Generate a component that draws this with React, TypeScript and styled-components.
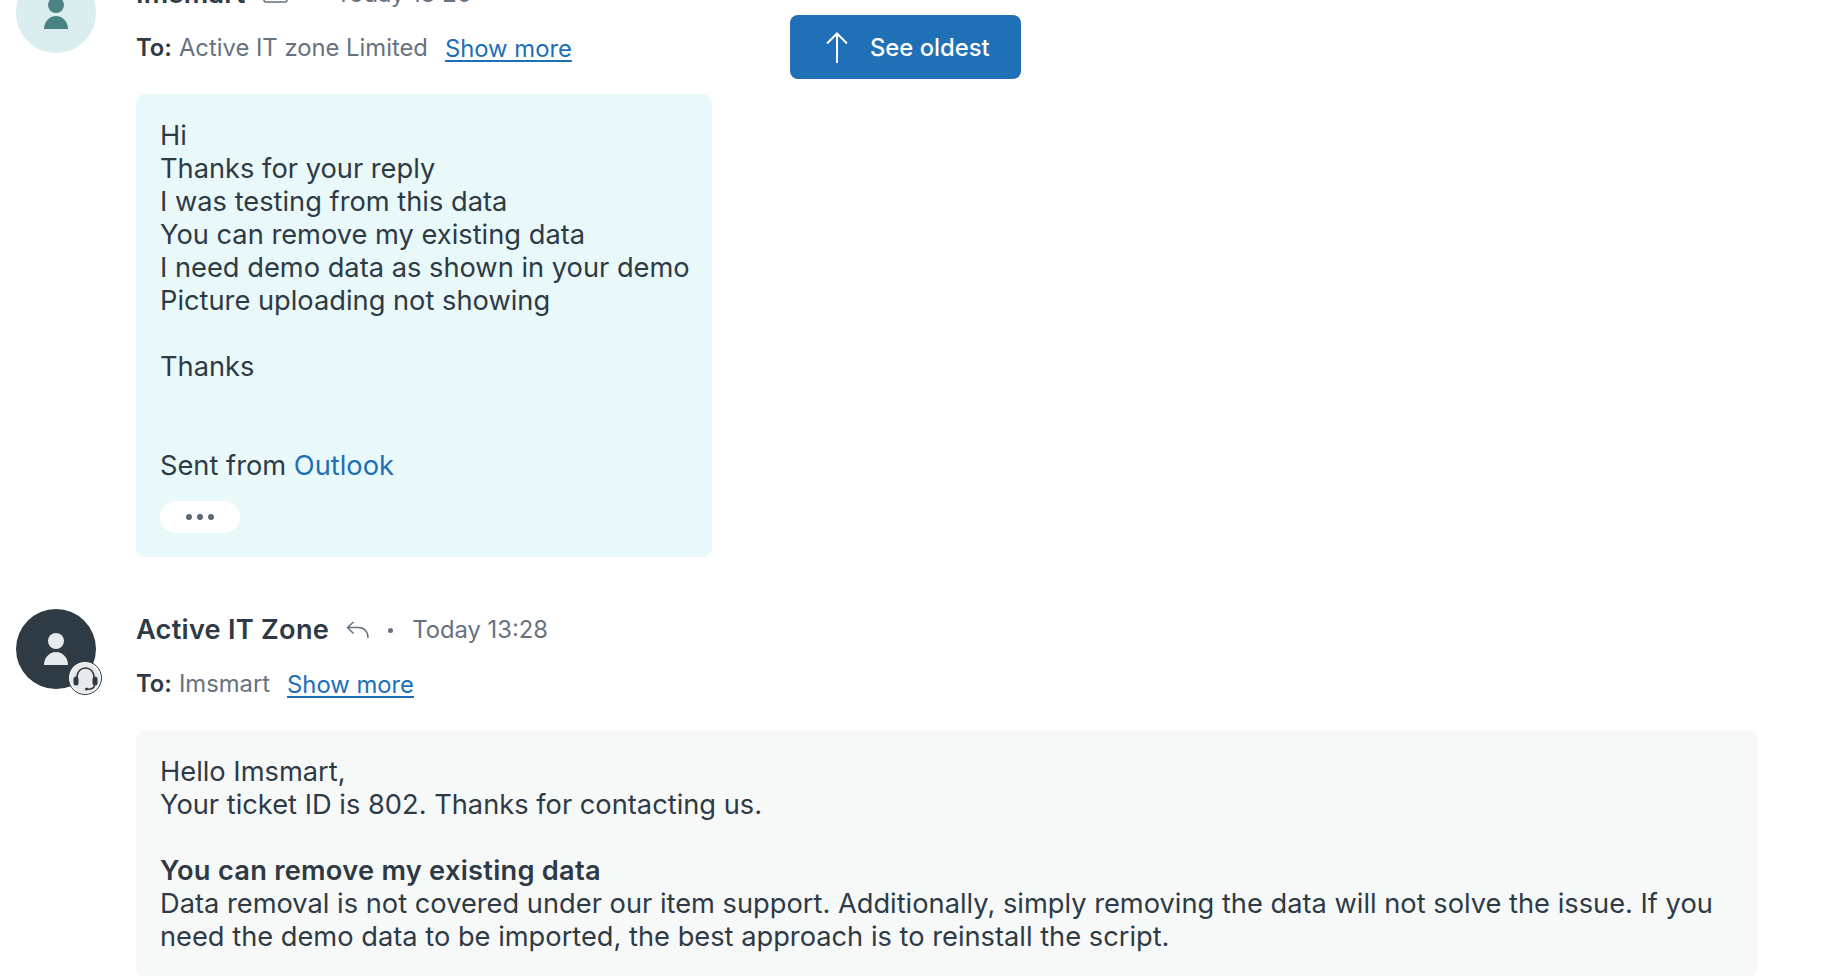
import React from 'react'
import styled, { createGlobalStyle } from 'styled-components'

const GlobalStyle = createGlobalStyle`
  html, body {
    margin: 0;
    height: 100%;
    overflow: hidden;
    background: #fff;
  }
  body {
    font-family: Inter, "Liberation Sans", sans-serif;
    color: #2e3a45;
  }
`

const Page = styled.div`
  position: relative;
  height: 976px;
  overflow: hidden;
  padding: 0 66px 0 16px;
  box-sizing: border-box;
`
const Thread = styled.div`
  display: flex;
  flex-direction: column;
  gap: 52px;
  margin-top: -27px;
`
const Message = styled.div`
  display: grid;
  grid-template-columns: 80px 1fr;
  column-gap: 40px;
`
const Avatar = styled.div<{ $agent?: boolean }>`
  position: relative;
  width: 80px;
  height: 80px;
  border-radius: 50%;
  display: flex;
  align-items: center;
  justify-content: center;
  background: ${(p) => (p.$agent ? '#2e3a44' : '#daedef')};
  color: ${(p) => (p.$agent ? '#e6eaed' : '#4a8285')};
`
const Badge = styled.span`
  position: absolute;
  right: -6px;
  bottom: -6px;
  width: 34px;
  height: 34px;
  box-sizing: border-box;
  border-radius: 50%;
  background: #e6eaed;
  border: 1.5px solid #2e3a44;
  box-shadow: inset 0 0 0 1px #fff;
  display: flex;
  align-items: center;
  justify-content: center;
  color: #2e3a44;
`
const Content = styled.div`
  min-width: 0;
`
const HeaderRow = styled.div`
  display: flex;
  align-items: center;
  height: 41px;
`
const Name = styled.span`
  font-size: 27.2px;
  font-weight: 600;
  letter-spacing: 0.25px;
  color: #2e3a45;
`
const MetaIcon = styled.span`
  display: flex;
  margin-left: 17px;
  color: #67727e;
`
const Dot = styled.span`
  width: 5px;
  height: 5px;
  border-radius: 50%;
  background: #67727e;
  margin: 2px 19px 0 19px;
`
const Time = styled.span`
  font-size: 23.8px;
  color: #67727e;
`
const ToRow = styled.div`
  display: flex;
  align-items: center;
  height: 41px;
  margin-top: 13px;
  font-size: 23.8px;
`
const ToLabel = styled.strong`
  font-weight: 600;
  margin-right: 7px;
`
const ToName = styled.span`
  color: #67727e;
`
const ShowMore = styled.a`
  margin: 2px 0 0 17px;
  color: #1d6fb8;
  text-decoration: underline;
  text-decoration-thickness: 2px;
  text-underline-offset: 3px;
`
const Card = styled.div<{ $customer?: boolean }>`
  margin-top: 26px;
  box-sizing: border-box;
  padding: 25px 16px 24px 24px;
  border-radius: 10px;
  font-size: 27.26px;
  line-height: 33px;
  width: ${(p) => (p.$customer ? '576px' : '1622px')};
  background: ${(p) => (p.$customer ? '#e9f8f8' : '#f7f9f9')};
`
const Line = styled.div`
  min-height: 33px;
`
const Strong = styled.strong`
  font-weight: 600;
  letter-spacing: 0.25px;
`
const TextLink = styled.a`
  color: #1d6fb8;
  text-decoration: none;
`
const MoreButton = styled.button`
  display: flex;
  align-items: center;
  justify-content: center;
  gap: 5px;
  width: 80px;
  height: 32px;
  margin-top: 19px;
  padding: 0;
  border: 0;
  border-radius: 16px;
  background: #fff;
  span {
    width: 6px;
    height: 6px;
    border-radius: 50%;
    background: #5b6870;
  }
`
const OldestButton = styled.button`
  position: absolute;
  left: 790px;
  top: 15px;
  width: 231px;
  height: 64px;
  display: flex;
  align-items: center;
  gap: 22px;
  padding: 0 0 0 36px;
  border: 0;
  border-radius: 8px;
  background: #1f70b6;
  color: #fff;
  font-family: inherit;
  font-size: 23.8px;
  font-weight: 500;
`

const PersonIcon = () => (
  <svg width="28" height="32" viewBox="0 0 28 32" fill="currentColor">
    <circle cx="14" cy="8" r="8" />
    <path d="M2 32c0-7 5-13 12-13s12 6 12 13z" />
  </svg>
)

const HeadsetIcon = () => (
  <svg width="27" height="25" viewBox="0 0 27 25" fill="none">
    <path d="M5 12v-1.500a8.500 8.500 0 0 1 17 0V12" stroke="currentColor" strokeWidth="1.600" />
    <rect x="1.500" y="10.500" width="5" height="9" rx="2.500" fill="currentColor" />
    <rect x="20.500" y="10.500" width="5" height="9" rx="2.500" fill="currentColor" />
    <path d="M22.500 19c0 3-3 4.200-7 4.200" stroke="currentColor" strokeWidth="1.600" strokeLinecap="round" />
    <circle cx="14.500" cy="23" r="1.500" fill="currentColor" />
  </svg>
)

const ReplyIcon = () => (
  <svg width="23" height="18" viewBox="0 0 23 18" fill="none" stroke="currentColor" strokeWidth="1.500">
    <path d="M7.500 1 1.500 6.500 7.500 12.500" strokeLinejoin="round" />
    <path d="M1.500 6.500H12.500C18 6.500 22 10.500 22 17" />
  </svg>
)

const MailIcon = () => (
  <svg width="30" height="18" viewBox="0 0 30 18" fill="none" stroke="currentColor" strokeWidth="1.500">
    <rect x="1" y="1" width="23" height="16" rx="2" />
    <path d="m1 3 11.500 8L24 3" />
  </svg>
)

const ArrowUpIcon = () => (
  <svg width="22" height="31" viewBox="0 0 22 31" fill="none" stroke="currentColor" strokeWidth="2">
    <path d="M11 31V1.500" />
    <path d="M1 11.500 11 1.500l10 10" />
  </svg>
)

const customerLines = [
  'Hi',
  'Thanks for your reply',
  'I was testing from this data',
  'You can remove my existing data',
  'I need demo data as shown in your demo',
  'Picture uploading not showing',
  '',
  'Thanks',
  '',
  '',
]

export default function App() {
  return (
    <Page>
      <GlobalStyle />
      <Thread>
        <Message>
          <Avatar>
            <PersonIcon />
          </Avatar>
          <Content>
            <HeaderRow>
              <Name>Imsmart</Name>
              <MetaIcon>
                <MailIcon />
              </MetaIcon>
              <Dot />
              <Time>Today 13:20</Time>
            </HeaderRow>
            <ToRow>
              <ToLabel>To:</ToLabel>
              <ToName>Active IT zone Limited</ToName>
              <ShowMore href="#">Show more</ShowMore>
            </ToRow>
            <Card $customer>
              {customerLines.map((line, i) => (
                <Line key={i}>{line}</Line>
              ))}
              <Line>
                Sent from <TextLink href="#">Outlook</TextLink>
              </Line>
              <MoreButton aria-label="Show trimmed content">
                <span />
                <span />
                <span />
              </MoreButton>
            </Card>
          </Content>
        </Message>
        <Message>
          <Avatar $agent>
            <PersonIcon />
            <Badge>
              <HeadsetIcon />
            </Badge>
          </Avatar>
          <Content>
            <HeaderRow>
              <Name>Active IT Zone</Name>
              <MetaIcon>
                <ReplyIcon />
              </MetaIcon>
              <Dot />
              <Time>Today 13:28</Time>
            </HeaderRow>
            <ToRow>
              <ToLabel>To:</ToLabel>
              <ToName>Imsmart</ToName>
              <ShowMore href="#">Show more</ShowMore>
            </ToRow>
            <Card>
              <Line>Hello Imsmart,</Line>
              <Line>Your ticket ID is 802. Thanks for contacting us.</Line>
              <Line />
              <Line>
                <Strong>You can remove my existing data</Strong>
              </Line>
              <Line>
                Data removal is not covered under our item support. Additionally, simply removing the data will not solve the issue. If you need the demo data to be imported, the best approach is to reinstall the script.
              </Line>
            </Card>
          </Content>
        </Message>
      </Thread>
      <OldestButton>
        <ArrowUpIcon />
        See oldest
      </OldestButton>
    </Page>
  )
}
